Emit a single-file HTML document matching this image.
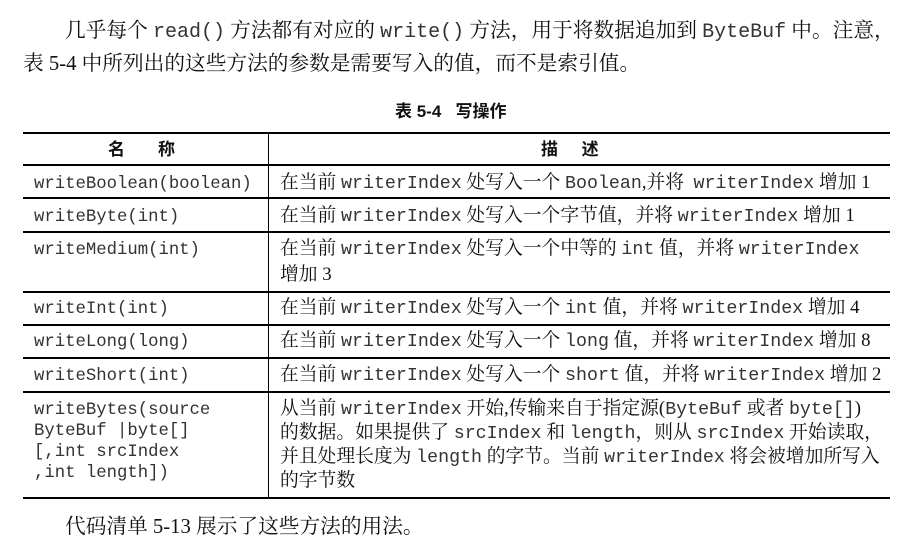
<!DOCTYPE html>
<html><head><meta charset="utf-8"><style>
body{margin:0;width:897px;height:550px;background:#fff;position:relative;overflow:hidden;color:#111;font-family:"Liberation Serif","Noto Serif CJK SC",serif;font-size:18.8px}
.t{position:absolute;white-space:nowrap;line-height:22px;height:22px}
code{font-family:"Liberation Mono",monospace;font-size:18.3px;color:#333}
.p{font-size:20.7px}
.p code{font-size:20px}
.n code{font-size:17.3px}
.h{position:absolute;background:#000;height:2px;left:23px;width:867px}
.v{position:absolute;background:#000;width:1.3px;left:268px;top:133px;height:365px}
.b{font-family:"Liberation Sans","Noto Sans CJK SC",sans-serif;font-weight:bold;font-size:17px}
</style></head><body>
<div class="t p" style="left:65px;top:20px">几乎每个 <code>read()</code> 方法都有对应的 <code>write()</code> 方法，用于将数据追加到 <code>ByteBuf</code> 中。注意，</div>
<div class="t p" style="left:23px;top:53px">表 5-4 中所列出的这些方法的参数是需要写入的值，而不是索引值。</div>
<div class="t b" style="left:395px;top:101px">表 5-4&nbsp;&nbsp;&nbsp;写操作</div>
<div class="h" style="top:132px"></div>
<div class="h" style="top:164px"></div>
<div class="h" style="top:197px;height:1.5px"></div>
<div class="h" style="top:231px;height:1.5px"></div>
<div class="h" style="top:291px;height:1.5px"></div>
<div class="h" style="top:324px;height:1.5px"></div>
<div class="h" style="top:357px;height:1.5px"></div>
<div class="h" style="top:391px;height:1.5px"></div>
<div class="h" style="top:497px"></div>
<div class="v"></div>
<div class="t b" style="left:108px;top:139px">名&nbsp;&nbsp;&nbsp;&nbsp;&nbsp;&nbsp;&nbsp;称</div>
<div class="t b" style="left:541px;top:139px">描&nbsp;&nbsp;&nbsp;&nbsp;&nbsp;述</div>
<div class="t n" style="left:34px;top:172px"><code>writeBoolean(boolean)</code></div>
<div class="t" style="left:280px;top:172px">在当前 <code>writerIndex</code> 处写入一个 <code>Boolean</code>,并将&nbsp; <code>writerIndex</code> 增加 1</div>
<div class="t n" style="left:34px;top:205px"><code>writeByte(int)</code></div>
<div class="t" style="left:280px;top:205px">在当前 <code>writerIndex</code> 处写入一个字节值，并将 <code>writerIndex</code> 增加 1</div>
<div class="t n" style="left:34px;top:238px"><code>writeMedium(int)</code></div>
<div class="t" style="left:280px;top:238px">在当前 <code>writerIndex</code> 处写入一个中等的 <code>int</code> 值，并将 <code>writerIndex</code></div>
<div class="t" style="left:280px;top:264px">增加 3</div>
<div class="t n" style="left:34px;top:297px"><code>writeInt(int)</code></div>
<div class="t" style="left:280px;top:297px">在当前 <code>writerIndex</code> 处写入一个 <code>int</code> 值，并将 <code>writerIndex</code> 增加 4</div>
<div class="t n" style="left:34px;top:330px"><code>writeLong(long)</code></div>
<div class="t" style="left:280px;top:330px">在当前 <code>writerIndex</code> 处写入一个 <code>long</code> 值，并将 <code>writerIndex</code> 增加 8</div>
<div class="t n" style="left:34px;top:364px"><code>writeShort(int)</code></div>
<div class="t" style="left:280px;top:364px">在当前 <code>writerIndex</code> 处写入一个 <code>short</code> 值，并将 <code>writerIndex</code> 增加 2</div>
<div class="t n" style="left:34px;top:398px"><code>writeBytes(source</code></div>
<div class="t n" style="left:34px;top:419px"><code>ByteBuf |byte[]</code></div>
<div class="t n" style="left:34px;top:440px"><code>[,int srcIndex</code></div>
<div class="t n" style="left:34px;top:461px"><code>,int length])</code></div>
<div class="t" style="left:280px;top:398px">从当前 <code>writerIndex</code> 开始,传输来自于指定源(<code>ByteBuf</code> 或者 <code>byte[]</code>)</div>
<div class="t" style="left:280px;top:422px">的数据。如果提供了 <code>srcIndex</code> 和 <code>length</code>，则从 <code>srcIndex</code> 开始读取，</div>
<div class="t" style="left:280px;top:446px">并且处理长度为 <code>length</code> 的字节。当前 <code>writerIndex</code> 将会被增加所写入</div>
<div class="t" style="left:280px;top:470px">的字节数</div>
<div class="t p" style="left:65px;top:516px">代码清单 5-13 展示了这些方法的用法。</div>
</body></html>
